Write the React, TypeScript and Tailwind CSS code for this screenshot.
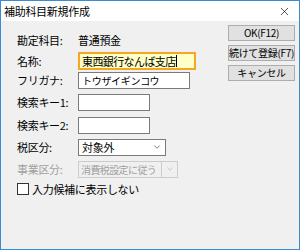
import { X, ChevronDown } from "lucide-react"

const FONT = { fontFamily: '"Noto Sans CJK JP", "Noto Sans", sans-serif' }

function Label({ children, disabled }: { children: string; disabled?: boolean }) {
  return (
    <div className={`w-[61px] shrink-0 whitespace-nowrap ${disabled ? "text-[#a0a0a0]" : "text-black"}`}>{children}</div>
  )
}

function Row({ label, children, className = "", disabled }: { label: string; children?: React.ReactNode; className?: string; disabled?: boolean }) {
  return (
    <div className={`flex items-center h-[18px] ${className}`}>
      <Label disabled={disabled}>{label}</Label>
      {children}
    </div>
  )
}

function Btn({ children }: { children: string }) {
  return (
    <button className="w-[67px] h-[16px] bg-[#e1e1e1] border border-[#adadad] text-[10px] tracking-[-0.3px] whitespace-nowrap leading-none text-black flex items-center justify-center">
      {children}
    </button>
  )
}

export default function App() {
  return (
    <div style={FONT} className="w-[300px] h-[250px] border border-[#3b8bd1] flex flex-col bg-[#f0f0f0] text-[11px] tracking-[-0.3px] overflow-hidden">
      {/* タイトルバー */}
      <div className="h-[20px] bg-white flex items-center justify-between pl-[3px] pr-[8px] shrink-0">
        <span className="text-[11px] text-black">補助科目新規作成</span>
        <X className="w-[13px] h-[13px] text-black" strokeWidth={1.2} />
      </div>

      <div className="flex flex-1 pl-[16px] pr-[4px]">
        <div className="flex-1 flex flex-col pt-[10px]">
          <Row label="勘定科目:">
            <span>普通預金</span>
          </Row>
          <Row label="名称:" className="mt-[3px]">
            <div className="w-[118px] h-[18px] bg-[#ffffc8] border-2 border-[#f5a623] flex items-center pl-[2px] whitespace-nowrap tracking-[-0.6px]">
              東西銀行なんば支店<span className="w-px h-[12px] bg-black" />
            </div>
          </Row>
          <Row label="フリガナ:" className="mt-[1px]">
            <div className="w-[112px] h-[17px] bg-white border border-[#7a7a7a] flex items-center pl-[3px] text-[10px] whitespace-nowrap">
              トウザイギンコウ
            </div>
          </Row>
          <Row label="検索キー1:" className="mt-[4px]">
            <div className="w-[72px] h-[17px] bg-white border border-[#7a7a7a]" />
          </Row>
          <Row label="検索キー2:" className="mt-[5px]">
            <div className="w-[72px] h-[17px] bg-white border border-[#7a7a7a]" />
          </Row>
          <Row label="税区分:" className="mt-[4px]">
            <div className="w-[88px] h-[17px] bg-white border border-[#7a7a7a] flex items-center justify-between pl-[3px] pr-[3px]">
              <span>対象外</span>
              <ChevronDown className="w-[10px] h-[10px] text-[#333]" strokeWidth={1.5} />
            </div>
          </Row>
          <Row label="事業区分:" className="mt-[4px]" disabled>
            <div className="w-[100px] h-[17px] bg-[#f0f0f0] border border-[#cccccc] flex items-center text-[#a0a0a0]">
              <span className="flex-1 pl-[2px] text-[10px] tracking-[-0.6px] whitespace-nowrap overflow-hidden">消費税設定に従う</span>
              <span className="w-[16px] h-full border-l border-[#cccccc] flex items-center justify-center">
                <ChevronDown className="w-[10px] h-[10px] text-[#b0b0b0]" strokeWidth={1.5} />
              </span>
            </div>
          </Row>
          <label className="flex items-center gap-[3px] mt-[3px] h-[16px]">
            <span className="w-[12px] h-[12px] bg-white border border-[#333]" />
            <span>入力候補に表示しない</span>
          </label>
        </div>

        <div className="flex flex-col gap-[4px] pt-[4px]">
          <Btn>OK(F12)</Btn>
          <Btn>続けて登録(F7)</Btn>
          <Btn>キャンセル</Btn>
        </div>
      </div>
    </div>
  )
}
